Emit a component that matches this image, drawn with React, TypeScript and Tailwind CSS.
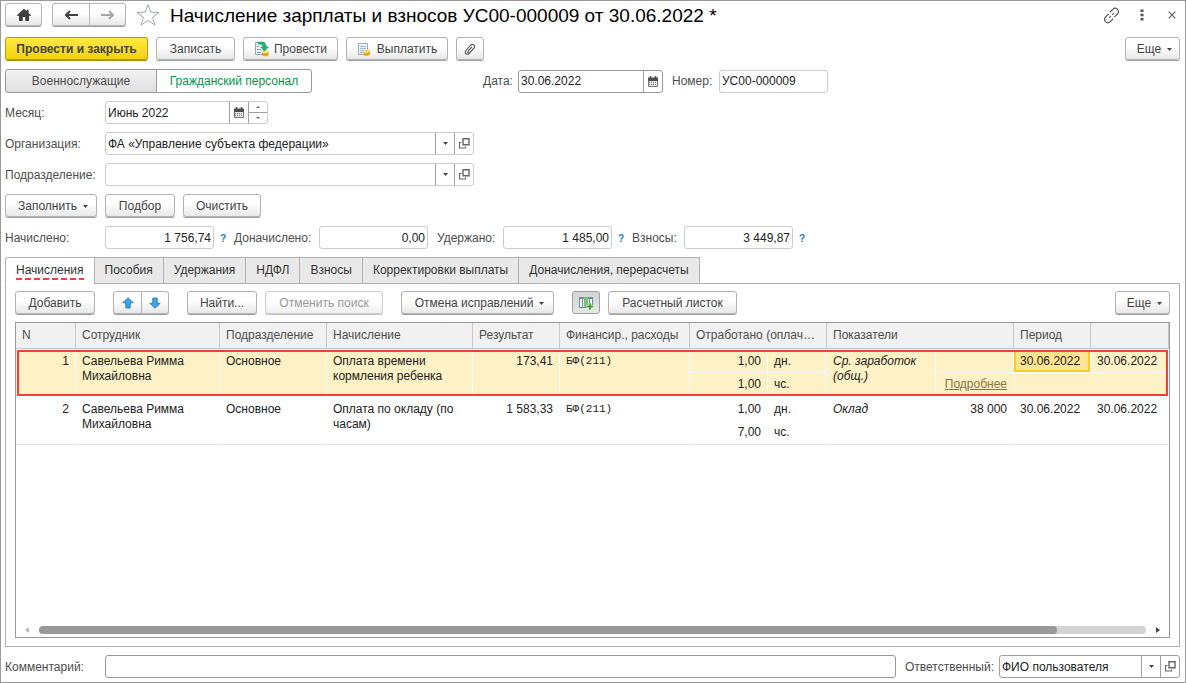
import React, { useState } from 'react';
import clsx from 'clsx';

const TABS = [
    'Начисления',
    'Пособия',
    'Удержания',
    'НДФЛ',
    'Взносы',
    'Корректировки выплаты',
    'Доначисления, перерасчеты',
];

interface AccrualRow {
    n: number;
    employee: string;
    department: string;
    accrual: string;
    result: string;
    finance: string;
    days: string;
    hours: string;
    indicator: string;
    indicatorValue: string;
    hasDetails: boolean;
    from: string;
    to: string;
}

const ROWS: AccrualRow[] = [
    {
        n: 1,
        employee: 'Савельева Римма Михайловна',
        department: 'Основное',
        accrual: 'Оплата времени кормления ребенка',
        result: '173,41',
        finance: 'БФ(211)',
        days: '1,00',
        hours: '1,00',
        indicator: 'Ср. заработок (общ.)',
        indicatorValue: '',
        hasDetails: true,
        from: '30.06.2022',
        to: '30.06.2022',
    },
    {
        n: 2,
        employee: 'Савельева Римма Михайловна',
        department: 'Основное',
        accrual: 'Оплата по окладу (по часам)',
        result: '1 583,33',
        finance: 'БФ(211)',
        days: '1,00',
        hours: '7,00',
        indicator: 'Оклад',
        indicatorValue: '38 000',
        hasDetails: false,
        from: '30.06.2022',
        to: '30.06.2022',
    },
];

/* ---------- icons ---------- */

const HomeIcon = () => (
    <svg width="16" height="14" viewBox="0 0 16 14" fill="#404040" aria-hidden="true">
        <path d="M8 0.8 0.8 7.2 1.9 8.3 3 7.4V13h3.7V9h2.6v4H13V7.4l1.1.9 1.1-1.1L12.6 5V1.8h-2v1.3z" />
    </svg>
);

const ArrowIcon = ({ dir }: { dir: 'left' | 'right' }) => (
    <svg
        width="14"
        height="12"
        viewBox="0 0 14 12"
        fill="none"
        stroke={dir === 'left' ? '#404040' : '#a6a6a6'}
        strokeWidth="2"
        aria-hidden="true"
    >
        {dir === 'left' ? <path d="M14 6H2M6 2 2 6l4 4" /> : <path d="M0 6h12M8 2l4 4-4 4" />}
    </svg>
);

const StarIcon = () => (
    <svg width="24" height="22" viewBox="0 0 24 22" fill="#fff" stroke="#a3a8ae" strokeWidth="1" aria-hidden="true">
        <path d="M12 .8 14.800 8.100 23 8.400 16.600 13.200 18.900 21 12 16.500 5.100 21 7.400 13.200 1 8.400 9.200 8.100z" />
    </svg>
);

const LinkIcon = () => (
    <svg width="17" height="17" viewBox="0 0 17 17" fill="none" stroke="#555" strokeWidth="1.2" aria-hidden="true">
        <path d="M7.300 5.500V4.800L10 2.100a2.900 2.900 0 0 1 4.200 0l.4.5a2.900 2.900 0 0 1 0 4.200l-2.500 2.500-1.200.2" />
        <path d="M9.700 11.500v.7L7 14.900a2.900 2.900 0 0 1-4.200 0l-.4-.5a2.900 2.900 0 0 1 0-4.200l2.500-2.500 1.200-.2" />
        <path d="M6.200 10.800 7.800 9.200M9.200 7.800l1.600-1.600" />
    </svg>
);

const KebabIcon = () => (
    <svg width="4" height="12" viewBox="0 0 4 12" fill="#555" aria-hidden="true">
        <path d="M.5.5h3v2.500h-3zM.5 4.700h3v2.500h-3zM.5 8.900h3v2.500h-3z" />
    </svg>
);

const CloseIcon = () => (
    <svg width="8" height="8" viewBox="0 0 8 8" fill="none" stroke="#555" strokeWidth="1.100" aria-hidden="true">
        <path d="M.7.7l6.600 6.600M7.300.7.7 7.300" />
    </svg>
);

const PostIcon = () => (
    <svg width="16" height="16" viewBox="0 0 16 16" fill="none" aria-hidden="true">
        <path d="M1.500 1.500h9v12h-9z" fill="#eef4fa" stroke="#8ba5bd" />
        <path d="M3 5.500h2M3 8.500h4M3 11.500h4" stroke="#7f9cb8" />
        <path d="M8 10.500v3.500c0 1.800 6.500 1.800 6.500 0v-3.500z" fill="#e7b62c" />
        <ellipse cx="11.200" cy="10.500" rx="3.300" ry="1.500" fill="#fbe07a" />
        <path d="M8 12.700c1 1.300 5.500 1.300 6.500 0" stroke="#b98612" strokeWidth=".7" />
        <path d="M4 1.500c5-1.500 8 .2 8.300 4.500h2.200L10.500 10 6.700 6h2.500C9 3.800 7 2.500 4 3z" fill="#24b573" stroke="#10915a" strokeWidth=".6" />
    </svg>
);

const PayIcon = () => (
    <svg width="14" height="15" viewBox="0 0 14 15" fill="none" aria-hidden="true">
        <path d="M1.500 1.500h9v11h-9z" fill="#eaf2f9" stroke="#94b0c9" />
        <path d="M3 4.500h6M3 6.500h6M3 8.500h4M3 10.500h3" stroke="#a3bad0" />
        <path d="M6.500 9.500v3c0 1.800 6.500 1.500 6.500-.3v-3z" fill="#e3a921" />
        <ellipse cx="9.800" cy="9.300" rx="3.300" ry="1.700" transform="rotate(-12 9.800 9.300)" fill="#fbd75a" />
    </svg>
);

const ClipIcon = () => (
    <svg width="12" height="13" viewBox="0 0 12 13" fill="none" stroke="#555" strokeWidth="1.100" aria-hidden="true">
        <path d="M9.500 5.600 5.300 10.300c-2.300 2.300-5.500-.3-3.400-2.800L6.500 2.300c2.200-2.200 5.500.5 3.500 2.900L6 9.400c-1.500 1.200-2.800-.2-1.700-1.600L8 3.800" />
    </svg>
);

const CalendarIcon = () => (
    <svg width="10" height="11" viewBox="0 0 10 11" fill="none" aria-hidden="true">
        <path d="M.5 2.500h9v8h-9z" fill="#e6e6e6" stroke="#777" />
        <path d="M0 1.500h10V5H0z" fill="#4d4d4d" />
        <path d="M2.500 0v2M7.500 0v2" stroke="#4d4d4d" strokeWidth="1.500" />
        <path d="M1 6.500h8M1 8.500h8" stroke="#777" strokeDasharray="1 1" />
    </svg>
);

const OpenIcon = () => (
    <svg width="11" height="11" viewBox="0 0 11 11" fill="none" stroke="#666" aria-hidden="true">
        <path d="M4 .8h6v6H4z" strokeWidth="1.400" />
        <path d="M2.500 4.500h-2v5.500h6V8.500" strokeWidth="1.100" />
    </svg>
);

const Caret = () => (
    <svg width="5" height="3" viewBox="0 0 5 3" fill="#444" aria-hidden="true">
        <path d="M0 0h5L2.500 3z" />
    </svg>
);

const MoveIcon = ({ down }: { down?: boolean }) => (
    <svg width="12" height="12" viewBox="0 0 12 12" fill="#3aa5e8" stroke="#1f6fa8" strokeWidth=".8" aria-hidden="true">
        {down ? (
            <path d="M6 11.300 .8 6.300h3V1h4.400v5.300h3z" />
        ) : (
            <path d="M6 .7 .8 5.700h3V11h4.400V5.700h3z" />
        )}
    </svg>
);

const ColumnsIcon = () => (
    <svg width="15" height="14" viewBox="0 0 15 14" fill="none" aria-hidden="true">
        <path d="M.5 1.500h13v10H.5z" fill="#f4f8fb" stroke="#6d8ca6" />
        <path d="M0 1h14v2H0z" fill="#6d8ca6" />
        <path d="M3.500 3v8M10.500 3v8" stroke="#6d8ca6" />
        <path d="M5 1h4v10.500H5z" fill="#7cc46c" />
        <path d="M11 7v7M7.500 10.500h7.500" stroke="#fff" strokeWidth="3" />
        <path d="M11 7.300v6.500M7.800 10.500h6.500" stroke="#35a02c" strokeWidth="1.800" />
    </svg>
);

/* ---------- controls ---------- */

const BUTTON_VARIANTS = {
    normal: 'border-[#b3b3b3] bg-linear-to-b from-white from-40% to-[#e8e8e8] text-[#444] shadow-[0_1px_0_#a0a0a0]',
    primary: 'border-[#b89b00] bg-linear-to-b from-[#ffea40] to-[#f2d200] font-bold text-[#444] shadow-[0_1px_0_#a58b00]',
    pressed: 'border-[#a0a0a0] bg-linear-to-b from-[#d4d4d4] to-[#e6e6e6] text-[#444]',
    disabled: 'border-[#ccc] bg-linear-to-b from-white from-40% to-[#f0f0f0] text-[#999] shadow-[0_1px_0_#c4c4c4]',
};

interface ButtonProps extends React.ComponentProps<'button'> {
    variant?: keyof typeof BUTTON_VARIANTS;
}

const Button: React.FC<ButtonProps> = ({ variant = 'normal', className, children, ...rest }) => (
    <button
        type="button"
        className={clsx(
            'mb-px flex h-[23px] shrink-0 items-center justify-center rounded-[3px] border pt-px whitespace-nowrap',
            BUTTON_VARIANTS[variant],
            className,
        )}
        {...rest}
    >
        {children}
    </button>
);

const BOX = 'flex h-[23px] shrink-0 items-stretch rounded-[3px] border bg-white';
const INPUT = 'w-full min-w-0 bg-transparent px-[2px] pt-px text-[#222] outline-none';
const SIDE = 'flex w-[19px] shrink-0 items-center justify-center border-l border-[#a0a0a0]';

const Label: React.FC<React.ComponentProps<'label'>> = ({ className, ...rest }) => (
    <label className={clsx('shrink-0 pt-px whitespace-nowrap', className)} {...rest} />
);

const SelectField = ({ id, value, dark, className }: { id: string; value: string; dark?: boolean; className: string }) => (
    <div className={clsx(BOX, dark ? 'border-[#a0a0a0]' : 'border-[#ccc]', className)}>
        <div className="relative flex min-w-0 flex-1">
            <select id={id} className={clsx(INPUT, 'appearance-none')} defaultValue={value}>
                <option>{value}</option>
            </select>
            <span className={clsx(SIDE, 'pointer-events-none absolute inset-y-0 right-0')}>
                <Caret />
            </span>
        </div>
        <button type="button" aria-label="Открыть" className={SIDE}>
            <OpenIcon />
        </button>
    </div>
);

const TotalField = ({ id, label, value, labelClass }: { id: string; label: string; value: string; labelClass: string }) => (
    <>
        <Label htmlFor={id} className={labelClass}>{label}</Label>
        <div className={clsx(BOX, 'w-[109px] border-[#ccc]')}>
            <input id={id} className={clsx(INPUT, 'text-right')} defaultValue={value} />
        </div>
    </>
);

const Hint = () => (
    <button type="button" className="w-5 shrink-0 pt-px pr-[2px] text-[10px] font-bold text-[#1a7fc4]">
        ?
    </button>
);

const Row = ({ row, selected }: { row: AccrualRow; selected: boolean }) => {
    const cell = clsx('border-r px-[6px] align-top', selected ? 'border-white' : 'border-r-transparent');
    const top = clsx(cell, selected ? 'border-t pt-1' : 'pt-[5px]');
    // cells that touch the lower edge of the record
    const last = selected ? 'border-b' : 'border-b border-b-[#e3e3e3]';
    const split = selected && 'border-b';
    return (
        <tbody
            className={clsx(
                'text-[#222]',
                selected && 'bg-[#fef1c6] outline-2 outline-offset-[-3px] outline-[#fa3c3c]',
            )}
        >
            <tr className="h-6">
                <td rowSpan={2} className={clsx(top, last, 'text-right')}>{row.n}</td>
                <td rowSpan={2} className={clsx(top, last)}>{row.employee}</td>
                <td rowSpan={2} className={clsx(top, last)}>{row.department}</td>
                <td rowSpan={2} className={clsx(top, last)}>{row.accrual}</td>
                <td rowSpan={2} className={clsx(top, last, 'text-right')}>{row.result}</td>
                <td rowSpan={2} className={clsx(top, last, 'font-["Liberation_Mono",monospace] text-[11px]')}>{row.finance}</td>
                <td className={clsx(top, split, 'text-right')}>{row.days}</td>
                <td className={clsx(top, split)}>дн.</td>
                <td rowSpan={2} className={clsx(top, last, 'italic')}>{row.indicator}</td>
                <td className={clsx(top, split, 'text-right')}>{row.indicatorValue}</td>
                <td className={clsx(top, split, selected && 'bg-[#fee391] shadow-[inset_0_0_0_2px_#fcc928]')}>
                    {row.from}
                </td>
                <td className={clsx(top, split)}>{row.to}</td>
            </tr>
            <tr className="h-6">
                <td className={clsx(cell, last, 'pt-1 text-right')}>{row.hours}</td>
                <td className={clsx(cell, last, 'pt-1')}>чс.</td>
                <td className={clsx(cell, last, 'pt-1 text-right')}>
                    {row.hasDetails && (
                        <a href="#details" className="text-[#857448] underline">
                            Подробнее
                        </a>
                    )}
                </td>
                <td colSpan={2} className={clsx(cell, last)} />
            </tr>
        </tbody>
    );
};

export default function App() {
    const [tab, setTab] = useState(0);
    const [staff, setStaff] = useState(1);

    return (
        <div className='flex min-h-screen flex-col gap-2 border border-[#999] bg-white pt-[2px] pr-[5px] pb-1 pl-1 font-["Liberation_Sans",Arial,sans-serif] text-[12px] leading-[15px] text-[#4d4d4d]'>
            {/* Title bar */}
            <header className="mb-[2px] flex items-center">
                <Button aria-label="Домой" className="w-[37px]"><HomeIcon /></Button>
                <div className="ml-[10px] flex">
                    <Button aria-label="Назад" className="w-[38px] rounded-r-none"><ArrowIcon dir="left" /></Button>
                    <Button aria-label="Вперед" className="w-9 rounded-l-none border-l-0"><ArrowIcon dir="right" /></Button>
                </div>
                <button type="button" aria-label="В избранное" className="ml-[10px]"><StarIcon /></button>
                <h1 className="ml-[10px] flex-1 pt-px text-[19px] leading-[23px] whitespace-nowrap text-black">
                    Начисление зарплаты и взносов УС00-000009 от 30.06.2022 *
                </h1>
                <button type="button" aria-label="Получить ссылку"><LinkIcon /></button>
                <button type="button" aria-label="Меню" className="ml-5"><KebabIcon /></button>
                <button type="button" aria-label="Закрыть" className="mr-1 ml-6"><CloseIcon /></button>
            </header>

            {/* Commands */}
            <div className="flex gap-2">
                <Button variant="primary" className="w-[143px]">Провести и закрыть</Button>
                <Button className="w-[79px]">Записать</Button>
                <Button className="w-[95px] gap-1"><PostIcon />Провести</Button>
                <Button className="w-[102px] gap-[6px]"><PayIcon />Выплатить</Button>
                <Button aria-label="Файлы" className="w-7"><ClipIcon /></Button>
                <Button className="ml-auto w-[55px] gap-[6px] pl-1">Еще <Caret /></Button>
            </div>

            {/* Staff switch, date and number */}
            <div className="flex h-6 items-center">
                {['Военнослужащие', 'Гражданский персонал'].map((name, i) => (
                    <button
                        key={name}
                        type="button"
                        aria-pressed={staff === i}
                        onClick={() => setStaff(i)}
                        className={clsx(
                            'h-6 border border-[#999]',
                            i === 0 ? 'w-[152px] rounded-l-[3px]' : '-ml-px w-[156px] rounded-r-[3px]',
                            staff === i ? 'bg-white text-[#009646]' : 'bg-linear-to-b from-[#f2f2f2] to-[#e0e0e0]',
                        )}
                    >
                        {name}
                    </button>
                ))}
                <Label htmlFor="date" className="ml-[171px] w-[35px]">Дата:</Label>
                <div className={clsx(BOX, 'w-[145px] border-[#999]')}>
                    <input id="date" className={INPUT} defaultValue="30.06.2022" />
                    <button type="button" aria-label="Выбрать дату" className={SIDE}><CalendarIcon /></button>
                </div>
                <Label htmlFor="number" className="ml-[9px] w-[47px]">Номер:</Label>
                <div className={clsx(BOX, 'w-[109px] border-[#ccc]')}>
                    <input id="number" className={INPUT} defaultValue="УС00-000009" />
                </div>
            </div>

            <div className="flex items-center">
                <Label htmlFor="month" className="w-[100px]">Месяц:</Label>
                <div className={clsx(BOX, 'w-[163px] border-[#ccc]')}>
                    <input id="month" className={INPUT} defaultValue="Июнь 2022" />
                    <button type="button" aria-label="Выбрать месяц" className={SIDE}><CalendarIcon /></button>
                    <div className="flex w-[19px] shrink-0 flex-col border-l border-[#a0a0a0]">
                        <button type="button" aria-label="Следующий" className="flex flex-1 items-center justify-center border-b border-[#a0a0a0]">
                            <svg width="4" height="2" viewBox="0 0 4 2" fill="#666"><path d="M0 2h4L2 0z" /></svg>
                        </button>
                        <button type="button" aria-label="Предыдущий" className="flex flex-1 items-center justify-center">
                            <svg width="4" height="2" viewBox="0 0 4 2" fill="#666"><path d="M0 0h4L2 2z" /></svg>
                        </button>
                    </div>
                </div>
            </div>

            <div className="flex items-center">
                <Label htmlFor="org" className="w-[100px]">Организация:</Label>
                <SelectField id="org" value="ФА «Управление субъекта федерации»" className="w-[369px]" />
            </div>

            <div className="flex items-center">
                <Label htmlFor="dept" className="w-[100px]">Подразделение:</Label>
                <SelectField id="dept" value="" className="w-[369px]" />
            </div>

            <div className="flex gap-2">
                <Button className="w-[92px] gap-[6px] pl-1">Заполнить <Caret /></Button>
                <Button className="w-[70px]">Подбор</Button>
                <Button className="w-[78px]">Очистить</Button>
            </div>

            {/* Totals */}
            <div className="flex items-center">
                <TotalField id="accrued" label="Начислено:" value="1 756,74" labelClass="w-[100px]" />
                <Hint />
                <TotalField id="added" label="Доначислено:" value="0,00" labelClass="w-[85px]" />
                <TotalField id="withheld" label="Удержано:" value="1 485,00" labelClass="ml-[9px] w-[66px]" />
                <Hint />
                <TotalField id="contrib" label="Взносы:" value="3 449,87" labelClass="w-[52px]" />
                <Hint />
            </div>

            <div className="flex flex-1 flex-col">
                {/* Tabs sit on the panel's top border */}
                <div role="tablist" className="relative z-10 -mb-px flex">
                    {TABS.map((name, i) => (
                        <button
                            key={name}
                            type="button"
                            role="tab"
                            aria-selected={tab === i}
                            onClick={() => setTab(i)}
                            className={clsx(
                                'relative h-[27px] border border-[#b0b0b0] px-[10px] whitespace-nowrap text-[#333]',
                                i === 0 ? 'rounded-tl-[3px]' : '-ml-px',
                                tab === i ? 'border-b-white bg-white' : 'bg-[#e9e9e9]',
                            )}
                        >
                            {name}
                            {tab === i && (
                                <span className="absolute inset-x-[10px] bottom-[3px] h-[2px] bg-[repeating-linear-gradient(90deg,#fa3c3c_0_6px,transparent_6px_9px)]" />
                            )}
                        </button>
                    ))}
                </div>

                <section className="flex flex-1 flex-col gap-[7px] border border-[#b0b0b0] px-[9px] pt-[7px] pb-2">
                    <div className="flex">
                        <Button className="w-20">Добавить</Button>
                        <Button aria-label="Вверх" className="ml-[18px] w-[29px] rounded-r-none"><MoveIcon /></Button>
                        <Button aria-label="Вниз" className="w-[27px] rounded-l-none border-l-0"><MoveIcon down /></Button>
                        <Button className="ml-[18px] w-[70px]">Найти...</Button>
                        <Button variant="disabled" className="ml-2 w-[118px]" disabled>Отменить поиск</Button>
                        <Button className="ml-[18px] w-[153px] gap-[6px] pl-1">Отмена исправлений <Caret /></Button>
                        <Button variant="pressed" aria-label="Показать колонки" className="ml-[18px] w-7">
                            <ColumnsIcon />
                        </Button>
                        <Button className="ml-2 w-[129px]">Расчетный листок</Button>
                        <Button className="ml-auto w-[55px] gap-[6px] pl-1">Еще <Caret /></Button>
                    </div>

                    <div className="flex flex-1 flex-col justify-between border border-[#999]">
                        <table className="w-full table-fixed border-separate border-spacing-0">
                            <colgroup>
                                <col className="w-[60px]" />
                                <col className="w-[144px]" />
                                <col className="w-[107px]" />
                                <col className="w-[146px]" />
                                <col className="w-[87px]" />
                                <col className="w-[130px]" />
                                <col className="w-[78px]" />
                                <col className="w-[59px]" />
                                <col className="w-[109px]" />
                                <col className="w-[78px]" />
                                <col className="w-[77px]" />
                                <col />
                            </colgroup>
                            <thead>
                                <tr className="h-[26px] bg-[#f1f1f1] text-left [&>th]:overflow-hidden [&>th]:border-r [&>th]:border-b [&>th]:border-[#c8c8c8] [&>th]:px-[6px] [&>th]:font-normal [&>th]:text-ellipsis [&>th]:whitespace-nowrap">
                                    <th>N</th>
                                    <th>Сотрудник</th>
                                    <th>Подразделение</th>
                                    <th>Начисление</th>
                                    <th>Результат</th>
                                    <th>Финансир., расходы</th>
                                    <th colSpan={2}>Отработано (оплачено)</th>
                                    <th colSpan={2}>Показатели</th>
                                    <th>Период</th>
                                    <th />
                                </tr>
                            </thead>
                            {ROWS.map((row, i) => (
                                <Row key={row.n} row={row} selected={i === 0} />
                            ))}
                        </table>

                        <div className="flex h-[15px] items-center gap-2 px-2">
                            <svg width="7" height="6" viewBox="0 0 7 6" fill="#bbb"><path d="M5 0v6L1 3z" /></svg>
                            <div className="h-2 flex-1 rounded-full bg-[#d4d4d4]">
                                <div className="h-2 w-[92%] rounded-full bg-[#999]" />
                            </div>
                            <svg width="7" height="6" viewBox="0 0 7 6" fill="#444"><path d="M2 0v6l4-3z" /></svg>
                        </div>
                    </div>
                </section>
            </div>

            {/* Footer */}
            <footer className="flex items-center">
                <Label htmlFor="comment" className="w-[100px]">Комментарий:</Label>
                <div className={clsx(BOX, 'flex-1 border-[#999]')}>
                    <input id="comment" className={INPUT} />
                </div>
                <Label htmlFor="owner" className="ml-[9px] w-[94px]">Ответственный:</Label>
                <SelectField id="owner" value="ФИО пользователя" dark className="w-[181px]" />
            </footer>
        </div>
    );
}
